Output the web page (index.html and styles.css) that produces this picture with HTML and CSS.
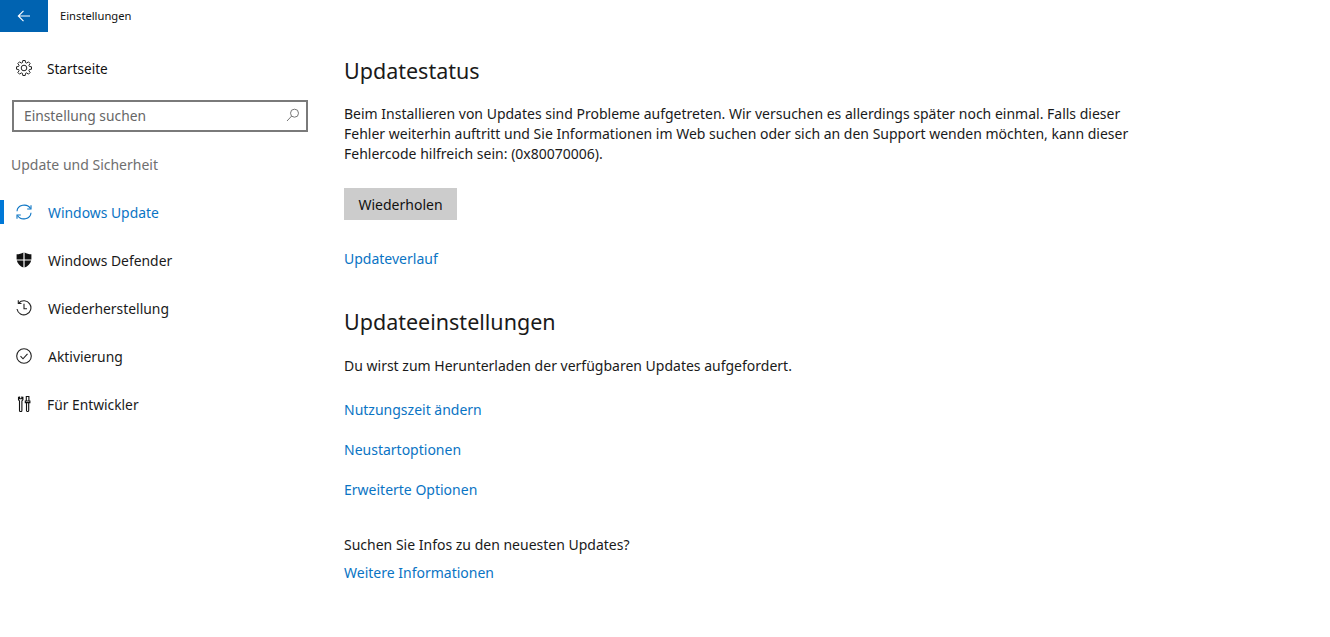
FILE: index.html
```html
<!DOCTYPE html>
<html lang="de">
<head>
<meta charset="utf-8">
<title>Einstellungen</title>
<link rel="stylesheet" href="styles.css">
</head>
<body>
<header class="titlebar">
  <div class="back">
    <svg width="16" height="16" viewBox="0 0 16 16" fill="none" stroke="#fff" stroke-width="1.1"><path d="M14 8H2.500M7.500 2.800 2.300 8l5.200 5.200"/></svg>
  </div>
  <div class="apptitle">Einstellungen</div>
</header>
<div class="layout">
  <aside class="sidebar">
    <div class="home">
      <svg class="icon" width="16" height="16" viewBox="0 0 16 16" fill="none" stroke="#222" stroke-width="1"><polygon points="13.38,6.46 15.51,6.81 15.51,9.19 13.38,9.54 12.9,10.71 14.15,12.47 12.47,14.15 10.71,12.9 9.54,13.38 9.19,15.51 6.81,15.51 6.46,13.38 5.29,12.9 3.53,14.15 1.85,12.47 3.1,10.71 2.62,9.54 .49,9.19 .49,6.81 2.62,6.46 3.1,5.29 1.85,3.53 3.53,1.85 5.29,3.1 6.46,2.62 6.81,.49 9.19,.49 9.54,2.62 10.71,3.1 12.47,1.85 14.15,3.53 12.9,5.29"/><circle cx="8" cy="8" r="2.800"/></svg>
      <span class="home-label">Startseite</span>
    </div>
    <div class="search">
      <span class="search-text">Einstellung suchen</span>
      <svg width="14" height="14" viewBox="0 0 14 14" fill="none" stroke="#777" stroke-width="1"><circle cx="8.500" cy="5.200" r="4"/><path d="M5.700 8 1 13"/></svg>
    </div>
    <div class="section">Update und Sicherheit</div>
    <nav class="nav">
      <div class="nav-item active">
        <svg class="icon" width="16" height="16" viewBox="0 0 16 16" fill="none" stroke="#0a74c4" stroke-width="1.100"><path d="M1 7.300A7.200 6.500 0 0 1 14.500 4.500M15 8.700A7.200 6.500 0 0 1 1.500 11.500"/><path d="M15 1.200v3.800h-3.800M1 14.800v-3.800h3.800"/></svg>
        <span>Windows Update</span>
      </div>
      <div class="nav-item">
        <svg class="icon" width="16" height="16" viewBox="0 0 16 16"><path fill="#111" d="M.6 2.200C3 2.200 5.500 1.600 7.400.4v7H.6zM8.600.4c1.900 1.200 4.400 1.800 6.800 1.800v5.200H8.600zM.8 8.600h6.600v7C4.200 14.500 1.500 12 .8 8.600zM8.600 8.600h6.600c-.7 3.400-3.400 5.900-6.600 7z"/></svg>
        <span>Windows Defender</span>
      </div>
      <div class="nav-item">
        <svg class="icon" width="16" height="16" viewBox="0 0 16 16" fill="none" stroke="#222" stroke-width="1.100"><path d="M2.800 3A7 7 0 1 1 1 9"/><path d="M2.300 .3v3.200h3.200M8 3.800V8.700H11"/></svg>
        <span>Wiederherstellung</span>
      </div>
      <div class="nav-item">
        <svg class="icon" width="16" height="16" viewBox="0 0 16 16" fill="none" stroke="#222" stroke-width="1.100"><circle cx="8" cy="8" r="7.300"/><path d="M4.500 8.200 7 10.800l4.500-5"/></svg>
        <span>Aktivierung</span>
      </div>
      <div class="nav-item dev">
        <svg class="icon" width="16" height="16" viewBox="0 0 16 16" fill="none" stroke="#111" stroke-width="1.100"><path d="M3.600 .4v2.400h2.200V.4M2.500 .8v3L3.500 5v9.400a1.200 1.200 0 0 0 2.400 0V5l1-1.200v-3"/><path d="M10.300.5h2.600V5h-2.600zM9.300 5h4.600v1.600H9.300zM10.500 6.600v7.800a1.100 1.100 0 0 0 2.200 0V6.600"/></svg>
        <span>Für Entwickler</span>
      </div>
    </nav>
  </aside>
  <main class="content">
    <h2 class="heading">Updatestatus</h2>
    <p class="para intro">Beim Installieren von Updates sind Probleme aufgetreten. Wir versuchen es allerdings später noch einmal. Falls dieser<br>Fehler weiterhin auftritt und Sie Informationen im Web suchen oder sich an den Support wenden möchten, kann dieser<br>Fehlercode hilfreich sein: (0x80070006).</p>
    <div class="retry">Wiederholen</div>
    <a class="link first-link">Updateverlauf</a>
    <h2 class="heading second">Updateeinstellungen</h2>
    <p class="para note">Du wirst zum Herunterladen der verfügbaren Updates aufgefordert.</p>
    <div class="links">
      <a class="link">Nutzungszeit ändern</a>
      <a class="link">Neustartoptionen</a>
      <a class="link">Erweiterte Optionen</a>
    </div>
    <p class="para more">Suchen Sie Infos zu den neuesten Updates?</p>
    <a class="link last">Weitere Informationen</a>
  </main>
</div>
</body>
</html>
```
FILE: styles.css
```css
* { box-sizing: border-box; }
html, body { margin: 0; height: 100%; }
body {
  background: #fff;
  color: #1a1a1a;
  font-family: "Noto Sans", "Open Sans", sans-serif;
  font-size: 14px;
  overflow: hidden;
}
.titlebar { display: flex; align-items: center; height: 32px; }
.back {
  width: 48px; height: 32px; background: #0063b1;
  display: flex; align-items: center; justify-content: center;
}
.apptitle { margin-left: 12px; margin-top: -2px; font-size: 11.200px; color: #111; }
.layout { display: flex; }
.sidebar { width: 344px; flex: none; }
.home {
  display: flex; align-items: center; height: 24px;
  margin-top: 24px; padding-left: 16px; color: #111;
}
.home-label { margin-left: 15px; font-size: 13.600px; }
.search {
  display: flex; align-items: center; justify-content: space-between;
  width: 296px; height: 32px; margin: 20px 0 0 12px;
  border: 2px solid #7a7a7a; padding: 0 6px 2px 10px; color: #666;
  font-size: 13.800px;
}
.section { margin: 23px 0 0 11px; height: 20px; line-height: 20px; color: #6f6f6f; }
.nav { margin-top: 13px; }
.nav-item {
  display: flex; align-items: center; height: 48px;
  padding-left: 16px; position: relative; color: #1a1a1a;
}
.nav-item span { margin-left: 16px; font-size: 13.900px; }
.nav-item.dev span { margin-left: 15px; font-size: 13.800px; }
.nav-item.active { color: #0a74c4; }
.nav-item.active::before {
  content: ""; position: absolute; left: 0; top: 12px;
  width: 4px; height: 24px; background: #0078d7;
}
.content { flex: none; width: 900px; }
.heading {
  margin: 24px 0 0; font-size: 21.500px; font-weight: 400;
  line-height: 30px; color: #1a1a1a;
}
.para { margin: 0; line-height: 20px; }
.para.intro { margin-top: 18px; }
.retry {
  width: 113px; height: 32px; margin-top: 24px;
  background: #cccccc; display: flex; align-items: center; justify-content: center;
  color: #111;
}
.link { display: block; color: #0a74c4; line-height: 20px; height: 20px; }
.first-link { margin-top: 29px; }
.heading.second { margin-top: 38px; }
.para.note { margin-top: 19px; }
.links { display: flex; flex-direction: column; gap: 20px; margin-top: 24px; }
.para.more { margin-top: 35px; }
.last { margin-top: 8px; }
```
